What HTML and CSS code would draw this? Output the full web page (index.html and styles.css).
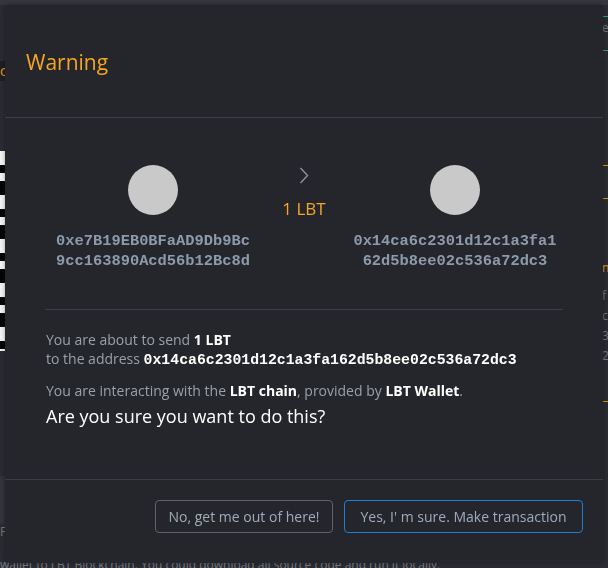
FILE: index.html
```html
<!DOCTYPE html>
<html>
<head>
<meta charset="utf-8">
<link rel="stylesheet" href="styles.css">
</head>
<body>
<div class="page">
  <div class="left-strip">
    <div class="tab">c</div>
    <div class="qr"></div>
    <div class="gray-block"></div>
    <div class="left-letter">F</div>
  </div>
  <div class="right-strip">
    <div class="rline green r1"></div>
    <div class="rtext">e</div>
    <div class="rline green r2"></div>
    <div class="rline orange r3"></div>
    <div class="rline orange r4"></div>
    <div class="rtext orange-t r5">n</div>
    <div class="rtext r6">f</div>
    <div class="rtext">c</div>
    <div class="rtext">3</div>
    <div class="rtext">2</div>
    <div class="rline orange r7"></div>
  </div>
</div>
<p class="bottom-text">wallet to LBT Blockchain. You could download all source code and run it locally.</p>

<div class="overlay">
  <div class="modal">
    <div class="modal-header">
      <h2 class="title">Warning</h2>
    </div>
    <div class="modal-body">
      <div class="transfer">
        <div class="party">
          <div class="avatar"></div>
          <div class="address">0xe7B19EB0BFaAD9Db9Bc<br>9cc163890Acd56b12Bc8d</div>
        </div>
        <div class="middle">
          <svg class="chevron" width="10" height="17" viewBox="0 0 10 17"><polyline points="1.5,1 8.5,8.5 1.5,16" fill="none" stroke="#8a93a2" stroke-width="1.4"/></svg>
          <div class="amount">1 LBT</div>
        </div>
        <div class="party">
          <div class="avatar"></div>
          <div class="address">0x14ca6c2301d12c1a3fa1<br>62d5b8ee02c536a72dc3</div>
        </div>
      </div>
      <div class="divider"></div>
      <p class="info">You are about to send <b>1 LBT</b><br>to the address <b class="mono">0x14ca6c2301d12c1a3fa162d5b8ee02c536a72dc3</b></p>
      <p class="info second">You are interacting with the <b>LBT chain</b>, provided by <b>LBT Wallet</b>.</p>
      <p class="question">Are you sure you want to do this?</p>
    </div>
    <div class="modal-footer">
      <button class="btn btn-cancel">No, get me out of here!</button>
      <button class="btn btn-confirm">Yes, I' m sure. Make transaction</button>
    </div>
  </div>
</div>
</body>
</html>
```

FILE: styles.css
```css
html, body {
  margin: 0;
  padding: 0;
}
body {
  width: 608px;
  height: 568px;
  overflow: hidden;
  background: #2b2c33;
  font-family: "Open Sans", "Noto Sans", sans-serif;
}
.page {
  display: flex;
  justify-content: space-between;
  height: 553px;
  border-top: 5px solid #34353d;
}
.left-strip {
  width: 6px;
  display: flex;
  flex-direction: column;
}
.tab {
  margin-top: 56px;
  height: 20px;
  background: #1f2025;
  color: #e59a1d;
  font-size: 14px;
  line-height: 20px;
  overflow: hidden;
}
.qr {
  margin-top: 70px;
  height: 200px;
  background: repeating-linear-gradient(180deg, #f2f2f2 0 14px, #050505 14px 22px, #f2f2f2 22px 30px, #050505 30px 44px);
}
.gray-block {
  margin-top: 125px;
  height: 48px;
  background: #33343b;
}
.left-letter {
  color: #777;
  font-size: 12px;
  line-height: 16px;
  overflow: hidden;
}
.right-strip {
  width: 6px;
  display: flex;
  flex-direction: column;
  border-left: 1px solid #1f2024;
  background: #2a2b31;
}
.rline { height: 1px; }
.green { background: #1faa6a; }
.orange { background: #d9901c; }
.r1 { margin-top: 11px; }
.r2 { margin-top: 13px; }
.r3 { margin-top: 114px; }
.r4 { margin-top: 32px; }
.r7 { margin-top: 36px; }
.rtext {
  color: #6f7580;
  font-size: 12px;
  line-height: 18px;
  height: 18px;
  overflow: hidden;
  margin-top: 2px;
}
.orange-t { color: #e59a1d; }
.r5 { margin-top: 60px; }
.r6 { margin-top: 10px; }
.bottom-text {
  margin: 0;
  color: #7a7d85;
  font-size: 12px;
  line-height: 14px;
  white-space: nowrap;
}

.overlay {
  position: fixed;
  top: 0;
  left: 0;
  right: 0;
  bottom: 0;
  padding: 5px;
  display: flex;
}
.modal {
  flex: 1;
  background: #25262b;
  border-radius: 5px;
  display: flex;
  flex-direction: column;
  overflow: hidden;
  box-shadow: 0 0 4px rgba(0, 0, 0, 0.35);
}
.modal-header {
  height: 112px;
  display: flex;
  align-items: center;
  padding-left: 21px;
  border-bottom: 1px solid #3c3d45;
  flex-shrink: 0;
}
.title {
  margin: 2px 0 0;
  color: #f5a623;
  font-size: 21px;
  font-weight: 400;
}
.modal-body {
  flex: 1;
  padding: 0 40px;
}
.transfer {
  display: grid;
  grid-template-columns: 216px 86px 216px;
  margin-top: 47px;
}
.party {
  display: flex;
  flex-direction: column;
  align-items: center;
}
.avatar {
  width: 50px;
  height: 50px;
  border-radius: 50%;
  background: #c9c9c9;
}
.address {
  margin-top: 16px;
  font-family: "Liberation Mono", "DejaVu Sans Mono", monospace;
  font-weight: 700;
  font-size: 15.4px;
  line-height: 20px;
  color: #8c9aab;
  text-align: center;
}
.middle {
  display: flex;
  flex-direction: column;
  align-items: center;
}
.chevron {
  margin-top: 2px;
}
.amount {
  margin-top: 14px;
  color: #f5a623;
  font-size: 17px;
  line-height: 22px;
}
.divider {
  margin-top: 38px;
  height: 1px;
  background: #3c3d45;
}
.info {
  margin: 20px 0 0 1px;
  color: #9aa0a9;
  font-size: 14px;
  line-height: 19px;
}
.info b {
  color: #ffffff;
  font-weight: 700;
}
.info b.mono {
  font-family: "Liberation Mono", "DejaVu Sans Mono", monospace;
  font-size: 14.8px;
}
.info.second {
  margin-top: 11px;
}
.question {
  margin: 4px 0 0 1px;
  color: #ffffff;
  font-size: 18px;
  line-height: 24px;
}
.modal-footer {
  height: 84px;
  flex-shrink: 0;
  border-top: 1px solid #3c3d45;
  display: flex;
  justify-content: flex-end;
  align-items: flex-start;
  padding: 20px 20px 0 0;
  box-sizing: border-box;
  gap: 11px;
}
.btn {
  height: 33px;
  background: transparent;
  border-radius: 4px;
  color: #9eabbb;
  font-family: "Open Sans", "Noto Sans", sans-serif;
  font-size: 14px;
  padding: 0 12px;
  cursor: pointer;
}
.btn-cancel {
  width: 178px;
  border: 1px solid #60626b;
}
.btn-confirm {
  width: 239px;
  border: 1px solid #1a7fd6;
}
```
